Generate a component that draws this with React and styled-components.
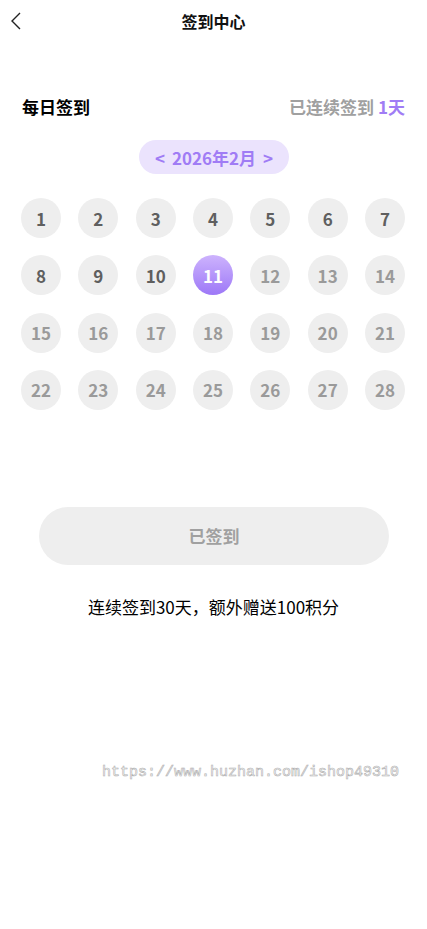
import React from "react";
import styled, { createGlobalStyle, css } from "styled-components";

const Global = createGlobalStyle`
  html, body { margin: 0; padding: 0; background: #fff; }
  body { font-family: "Noto Sans CJK SC", "Noto Sans", sans-serif; }
  * { box-sizing: border-box; }
`;

const Page = styled.div`
  width: 427px;
  min-height: 929px;
  background: #fff;
  display: flex;
  flex-direction: column;
`;

const NavBar = styled.div`
  height: 44px;
  display: flex;
  align-items: center;
  justify-content: center;
  position: relative;
`;

const Back = styled.div`
  position: absolute;
  left: 9px;
  top: 11px;
  width: 16px;
  height: 20px;
  display: flex;
`;

const Title = styled.div`
  font-size: 16px;
  font-weight: 700;
  color: #111;
  margin-top: -2px;
`;

const Header = styled.div`
  display: flex;
  justify-content: space-between;
  align-items: center;
  padding: 0 22px;
  margin-top: 50px;
  height: 24px;
`;

const HeadTitle = styled.div`
  font-size: 17px;
  font-weight: 700;
  color: #000;
`;

const Streak = styled.div`
  font-size: 17px;
  font-weight: 700;
  color: #a0a0a0;
  span { color: #a07cf5; }
`;

const MonthRow = styled.div`
  display: flex;
  justify-content: center;
  margin-top: 22px;
`;

const MonthPill = styled.div`
  width: 150px;
  height: 34px;
  border-radius: 17px;
  background: #ebe3fd;
  color: #a07cf5;
  font-size: 17px;
  font-weight: 700;
  display: flex;
  align-items: center;
  justify-content: center;
  gap: 7px;
  margin-left: 1px;
`;

const Grid = styled.div`
  display: grid;
  grid-template-columns: repeat(7, 40px);
  justify-content: space-between;
  row-gap: 17.33px;
  padding: 0 22px 0 21px;
  margin-top: 24px;
`;

const Day = styled.div`
  width: 40px;
  height: 40px;
  border-radius: 50%;
  background: #eeeeee;
  display: flex;
  align-items: center;
  justify-content: center;
  font-size: 17px;
  font-weight: 700;
  color: ${(p) => (p.$past ? "#5f5f5f" : "#9a9a9a")};
  ${(p) =>
    p.$today &&
    css`
      background: linear-gradient(180deg, #cdb3fd 0%, #9d78f7 100%);
      color: #fff;
    `}
`;

const ButtonRow = styled.div`
  display: flex;
  justify-content: center;
  margin-top: 97px;
`;

const SignButton = styled.div`
  width: 350px;
  height: 58px;
  border-radius: 29px;
  background: #eeeeee;
  color: #a0a0a0;
  font-size: 17px;
  font-weight: 700;
  display: flex;
  align-items: center;
  justify-content: center;
  margin-left: 1px;
`;

const Note = styled.div`
  text-align: center;
  font-size: 17px;
  color: #000;
  margin-top: 29px;
`;

const Watermark = styled.div`
  margin-top: 145px;
  padding-left: 102px;
  font-family: "Liberation Mono", monospace;
  font-size: 15px;
  color: transparent;
  -webkit-text-stroke: 0.6px #b0b0b0;
  white-space: nowrap;
`;

export default function App() {
  const days = Array.from({ length: 28 }, (_, i) => i + 1);
  return (
    <Page>
      <Global />
      <NavBar>
        <Back>
          <svg width="16" height="20" viewBox="0 0 16 20">
            <path d="M11 2 L3 10 L11 18" fill="none" stroke="#222" strokeWidth="1.4" />
          </svg>
        </Back>
        <Title>签到中心</Title>
      </NavBar>
      <Header>
        <HeadTitle>每日签到</HeadTitle>
        <Streak>
          已连续签到 <span>1天</span>
        </Streak>
      </Header>
      <MonthRow>
        <MonthPill>
          <span>&lt;</span>
          <span>2026年2月</span>
          <span>&gt;</span>
        </MonthPill>
      </MonthRow>
      <Grid>
        {days.map((d) => (
          <Day key={d} $past={d < 11} $today={d === 11}>
            {d}
          </Day>
        ))}
      </Grid>
      <ButtonRow>
        <SignButton>已签到</SignButton>
      </ButtonRow>
      <Note>连续签到30天，额外赠送100积分</Note>
      <Watermark>https://www.huzhan.com/ishop49310</Watermark>
    </Page>
  );
}
